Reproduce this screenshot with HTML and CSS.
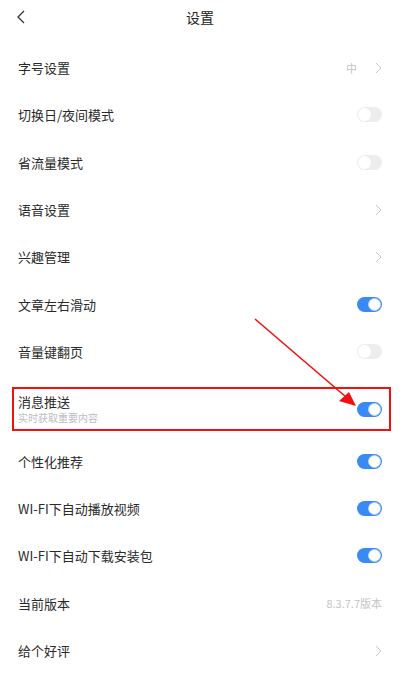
FILE: index.html
```
<!DOCTYPE html>
<html>

<head>
    <title>设置</title>
    <link rel="stylesheet" href="styles.css">
</head>

<body>
    <div class="page">
        <div class="header">
            <svg class="back" width="10" height="14" viewBox="0 0 10 14">
                <path d="M8 1 L2 7 L8 13" fill="none" stroke="#333" stroke-width="1.3" />
            </svg>
            <span class="title">设置</span>
        </div>

        <div class="list">
            <div class="row">
                <span class="label">字号设置</span>
                <span class="extra">中</span>
                <svg class="arrow" width="7" height="12" viewBox="0 0 7 12">
                    <path d="M1 1 L6 6 L1 11" fill="none" stroke="#c8c8c8" stroke-width="1" />
                </svg>
            </div>
            <div class="row">
                <span class="label">切换日/夜间模式</span>
                <span class="switch"></span>
            </div>
            <div class="row">
                <span class="label">省流量模式</span>
                <span class="switch"></span>
            </div>
            <div class="row">
                <span class="label">语音设置</span>
                <svg class="arrow" width="7" height="12" viewBox="0 0 7 12">
                    <path d="M1 1 L6 6 L1 11" fill="none" stroke="#c8c8c8" stroke-width="1" />
                </svg>
            </div>
            <div class="row">
                <span class="label">兴趣管理</span>
                <svg class="arrow" width="7" height="12" viewBox="0 0 7 12">
                    <path d="M1 1 L6 6 L1 11" fill="none" stroke="#c8c8c8" stroke-width="1" />
                </svg>
            </div>
            <div class="row">
                <span class="label">文章左右滑动</span>
                <span class="switch on"></span>
            </div>
            <div class="row">
                <span class="label">音量键翻页</span>
                <span class="switch"></span>
            </div>
            <div class="row marked">
                <div class="texts">
                    <span class="label">消息推送</span>
                    <span class="sub">实时获取重要内容</span>
                </div>
                <span class="switch on"></span>
            </div>
            <div class="row">
                <span class="label">个性化推荐</span>
                <span class="switch on"></span>
            </div>
            <div class="row">
                <span class="label">WI-FI下自动播放视频</span>
                <span class="switch on"></span>
            </div>
            <div class="row">
                <span class="label">WI-FI下自动下载安装包</span>
                <span class="switch on"></span>
            </div>
            <div class="row">
                <span class="label">当前版本</span>
                <span class="extra version">8.3.7.7版本</span>
            </div>
            <div class="row">
                <span class="label">给个好评</span>
                <svg class="arrow" width="7" height="12" viewBox="0 0 7 12">
                    <path d="M1 1 L6 6 L1 11" fill="none" stroke="#c8c8c8" stroke-width="1" />
                </svg>
            </div>
        </div>

        <!-- 红色箭头标注 -->
        <svg class="pointer" width="400" height="693" viewBox="0 0 400 693">
            <line x1="255" y1="319" x2="346" y2="397" stroke="#f01010" stroke-width="1.6" />
            <polygon points="356,406 339,401 349,392" fill="#f01010" />
        </svg>
    </div>
</body>

</html>
```

FILE: styles.css
```
body {
    margin: 0;
    font-family: 'Noto Sans CJK SC', 'Noto Sans', sans-serif;
    background-color: #ffffff;
    color: #333;
}

.page {
    position: relative;
    width: 400px;
    height: 693px;
    overflow: hidden;
}

.header {
    position: relative;
    display: flex;
    align-items: center;
    justify-content: center;
    height: 33px;
}

.back {
    position: absolute;
    left: 16px;
    top: 10px;
}

.title {
    font-size: 14px;
    color: #222;
}

.list {
    padding-top: 11px;
}

.row {
    display: flex;
    align-items: center;
    height: 47.3px;
    padding: 0 18px 0 18px;
    box-sizing: border-box;
}

.label {
    flex-grow: 1;
    font-size: 13px;
    color: #2a2a2a;
}

.extra {
    font-size: 11px;
    color: #c4c4c4;
    margin-right: 18px;
}

.version {
    margin-right: 0;
    font-size: 11px;
}

.arrow {
    display: block;
}

.switch {
    position: relative;
    width: 25px;
    height: 15px;
    border-radius: 8px;
    background-color: #ededed;
    flex-shrink: 0;
}

.switch::after {
    content: '';
    position: absolute;
    top: 1px;
    left: 1px;
    width: 13px;
    height: 13px;
    border-radius: 50%;
    background-color: #fff;
}

.switch.on {
    background-color: #3a8af5;
}

.switch.on::after {
    left: auto;
    right: 1px;
    width: 11px;
    height: 11px;
    border: 1px solid #b5d3fb;
}

.row.marked {
    height: 44px;
    margin: 12.3px 9px 6.3px 12px;
    padding: 0 7px 0 4px;
    border: 2px solid #f01010;
}

.texts {
    display: flex;
    flex-direction: column;
    flex-grow: 1;
}

.texts .label {
    line-height: 18px;
}

.sub {
    font-size: 10px;
    line-height: 14px;
    color: #bdbdbd;
}

.pointer {
    position: absolute;
    left: 0;
    top: 0;
    pointer-events: none;
}
```
